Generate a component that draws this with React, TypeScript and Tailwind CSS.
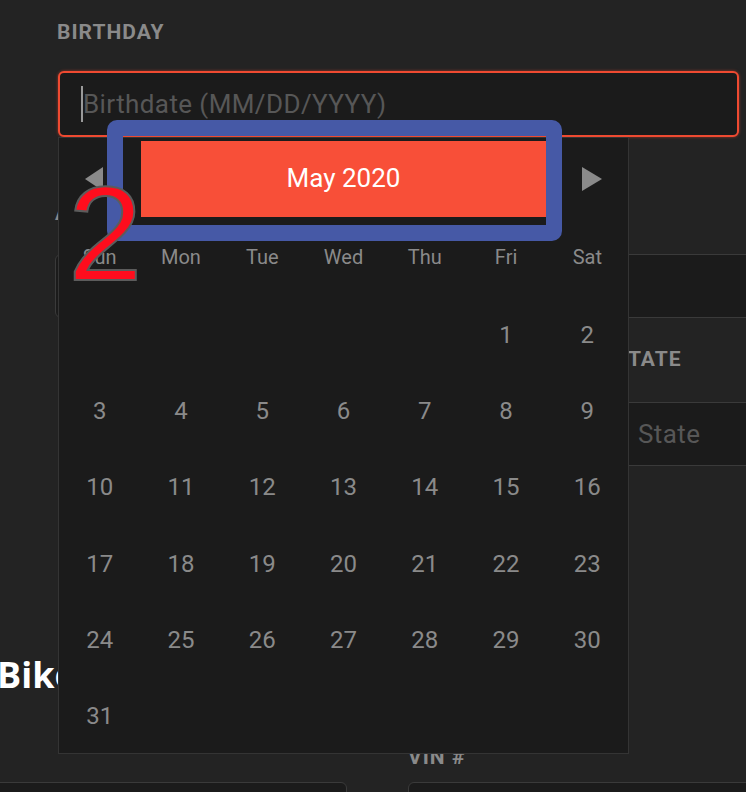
import React from 'react';

const weekdays = ['Sun', 'Mon', 'Tue', 'Wed', 'Thu', 'Fri', 'Sat'];
// May 2020 starts on a Friday
const days: (number | null)[] = [null, null, null, null, null, ...Array.from({ length: 31 }, (_, i) => i + 1)];

function Label({ children, className = '' }: { children: React.ReactNode; className?: string }) {
  return (
    <div className={`text-[21px] leading-none font-bold tracking-[1px] text-[#8a8a8a] uppercase whitespace-nowrap ${className}`}>
      {children}
    </div>
  );
}

function Field({ placeholder, className = '' }: { placeholder?: string; className?: string }) {
  return (
    <div className={`h-[64px] border border-[#3a3a3a] rounded-[6px] bg-[#1b1b1b] flex items-center pl-[23px] text-[26px] tracking-[0.4px] text-[#575757] ${className}`}>
      {placeholder}
    </div>
  );
}

export default function App() {
  return (
    <div className="relative w-[746px] h-[792px] overflow-hidden bg-[#232323] font-['Roboto',sans-serif]">
      {/* Form behind the date picker */}
      <div className="flex flex-col">
        <Label className="mt-[22px] ml-[57px]">Birthday</Label>
        <div className="mt-[28px] ml-[58px] w-[681px] h-[66px] rounded-[6px] border-2 border-[#ef4a31] bg-[#1b1b1b] shadow-[0_0_3px_rgba(239,74,49,0.6)] flex items-center pl-[21px]">
          <span className="w-[2px] h-[36px] bg-[#9a9a9a]" />
          <span className="text-[26px] tracking-[0.4px] text-[#575757]">Birthdate (MM/DD/YYYY)</span>
        </div>

        <Label className="mt-[66px] ml-[55px]">Address</Label>
        <Field className="mt-[30px] ml-[55px] w-[740px] shrink-0" placeholder="Street address" />

        <div className="flex gap-[19px] ml-[80px] mt-[31px]">
          <div className="w-[515px] shrink-0 flex flex-col">
            <Label>City</Label>
            <Field className="mt-[32px]" placeholder="City" />
          </div>
          <div className="w-[200px] shrink-0 flex flex-col">
            <Label>State</Label>
            <Field className="mt-[32px]" placeholder="State" />
          </div>
        </div>

        <h2 className="mt-[191px] ml-[-3px] text-[36px] leading-none font-bold text-white font-['Open_Sans',sans-serif] whitespace-nowrap">
          Bike Information
        </h2>

        <div className="flex gap-[61px] ml-[-50px] mt-[54px]">
          <div className="w-[397px] shrink-0 flex flex-col">
            <Label>&nbsp;</Label>
            <Field className="mt-[14px]" />
          </div>
          <div className="w-[400px] shrink-0 flex flex-col">
            <Label>Vin #</Label>
            <Field className="mt-[14px]" />
          </div>
        </div>
      </div>

      {/* Date picker popover */}
      <div className="absolute left-[58px] top-[137px] w-[571px] h-[617px] border border-[#343434] bg-[#1b1b1b] flex flex-col">
        <div className="h-[81px] shrink-0 flex items-center pl-[26px]">
          <svg width="18" height="24" viewBox="0 0 18 24">
            <polygon points="18,0 18,24 0,12" fill="#8a8a8a" />
          </svg>
          <div className="ml-[38px] w-[405px] h-[76px] bg-[#f84f38] flex items-center justify-center text-white text-[26px]">
            May 2020
          </div>
          <svg className="ml-[36px]" width="20" height="24" viewBox="0 0 20 24">
            <polygon points="0,0 20,12 0,24" fill="#8a8a8a" />
          </svg>
        </div>
        <div className="flex-1 grid grid-cols-7 grid-rows-7 text-[#8a8a8a]">
          {weekdays.map((d) => (
            <div key={d} className="flex items-center justify-center text-[20px]">
              {d}
            </div>
          ))}
          {days.map((d, i) => (
            <div key={i} className="flex items-center justify-center text-[24px] pt-[3px]">
              {d}
            </div>
          ))}
        </div>
      </div>

      {/* Annotation callout */}
      <div className="absolute left-[107px] top-[120px] w-[455px] h-[121px] border-[16px] border-[#4659a6] rounded-[10px]" />
      <div className="absolute left-[68px] top-[167px] text-[134px] leading-none text-[#ff0d1d] font-['Liberation_Sans',sans-serif] [-webkit-text-stroke:2px_#5c5c5c]">
        2
      </div>
    </div>
  );
}
